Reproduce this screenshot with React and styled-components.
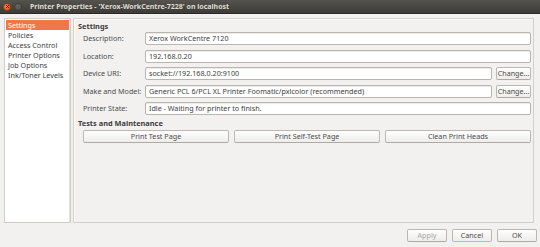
import React from 'react';
import styled, { createGlobalStyle } from 'styled-components';

const GlobalStyle = createGlobalStyle`
  html, body {
    margin: 0;
    padding: 0;
    background: #f2f1f0;
  }
  body {
    font-family: "Noto Sans", "DejaVu Sans", sans-serif;
    color: #3c3c3c;
  }
`;

const Window = styled.div`
  width: 540px;
  height: 247px;
  display: flex;
  flex-direction: column;
  background: #f2f1f0;
  overflow: hidden;
`;

const TitleBar = styled.div`
  height: 13px;
  display: flex;
  align-items: center;
  padding-left: 3px;
  background: linear-gradient(#55534d, #3c3b37);
  border-bottom: 1px solid #2b2a27;
`;

const WinButton = styled.span`
  width: 8px;
  height: 8px;
  border-radius: 50%;
  margin-right: 3px;
  display: flex;
  align-items: center;
  justify-content: center;
  background: ${p => (p.$close ? 'radial-gradient(circle at 40% 35%, #f58a5c, #df4a16)' : 'linear-gradient(#6a6862, #55534e)')};
  border: 0.5px solid ${p => (p.$close ? '#a83a10' : '#3a3935')};
  box-sizing: border-box;
`;

const Title = styled.span`
  margin-left: 5px;
  font-size: 7px;
  font-weight: 700;
  color: #dfdbd2;
  white-space: nowrap;
`;

const Body = styled.div`
  display: flex;
  gap: 2px;
  padding: 4px 6px 0 4px;
  height: 205px;
`;

const Sidebar = styled.ul`
  width: 65px;
  margin: 0;
  padding: 1px 0 0;
  list-style: none;
  background: #fff;
  border: 1px solid #cfccc7;
  box-shadow: inset -1px 0 0 #e6e4e0;
`;

const SideItem = styled.li`
  height: 10px;
  line-height: 10px;
  padding-left: 2px;
  margin: 0 1px;
  font-size: 7.2px;
  white-space: nowrap;
  background: ${p => (p.$active ? '#f07746' : 'transparent')};
  color: ${p => (p.$active ? '#fff' : '#3c3c3c')};
`;

const Panel = styled.section`
  flex: 1;
  border: 1px solid #d3d0cb;
  box-shadow: inset 1px 1px 0 #fbfbfa;
  padding: 2px 2px 0 4px;
`;

const Heading = styled.div`
  font-size: 7.4px;
  font-weight: 700;
  line-height: 11px;
  height: 11px;
`;

const Form = styled.div`
  display: grid;
  grid-template-columns: 62px 1fr;
  row-gap: 4.5px;
  padding-left: 5px;
  margin-bottom: 3px;
`;

const Label = styled.div`
  font-size: 7.2px;
  line-height: 13px;
  color: #4c4c4c;
  white-space: nowrap;
`;

const FieldRow = styled.div`
  display: flex;
  gap: 4px;
`;

const Entry = styled.div`
  flex: 1;
  height: 13px;
  box-sizing: border-box;
  background: #fff;
  border: 1px solid #b8b5af;
  border-radius: 2px;
  box-shadow: inset 0 1px 1px #eceae7;
  font-size: 7.2px;
  line-height: 11px;
  padding-left: 3px;
  white-space: nowrap;
  overflow: hidden;
`;

const Button = styled.button`
  height: 13px;
  box-sizing: border-box;
  padding: 0;
  border: 1px solid #bcb8b1;
  border-bottom-color: ${p => (p.$focus ? '#e9a89a' : '#aeaaa3')};
  border-radius: 2px;
  background: linear-gradient(#fdfdfc, #eeedeb);
  font-family: inherit;
  font-size: 7.2px;
  line-height: 11px;
  color: ${p => (p.$disabled ? '#aaa7a2' : '#4c4c4c')};
  white-space: nowrap;
`;

const ChangeButton = styled(Button)`
  width: 35px;
`;

const ActionRow = styled.div`
  display: grid;
  grid-template-columns: repeat(3, 1fr);
  gap: 5px;
  padding-left: 5px;
  margin-top: 1px;
`;

const Footer = styled.div`
  display: flex;
  justify-content: flex-end;
  gap: 5px;
  padding: 6px 3px 0 0;
`;

const DialogButton = styled(Button)`
  width: 40px;
`;

const rows = [
  { label: 'Description:', value: 'Xerox WorkCentre 7120' },
  { label: 'Location:', value: '192.168.0.20' },
  { label: 'Device URI:', value: 'socket://192.168.0.20:9100', change: true },
  { label: 'Make and Model:', value: 'Generic PCL 6/PCL XL Printer Foomatic/pxlcolor (recommended)', change: true },
  { label: 'Printer State:', value: 'Idle - Waiting for printer to finish.' },
];

const sections = ['Settings', 'Policies', 'Access Control', 'Printer Options', 'Job Options', 'Ink/Toner Levels'];

export default function App() {
  return (
    <>
      <GlobalStyle />
      <Window>
        <TitleBar>
          <WinButton $close>
            <svg width="5" height="5" viewBox="0 0 5 5">
              <path d="M1 1 L4 4 M4 1 L1 4" stroke="#4a1e0c" strokeWidth="0.9" />
            </svg>
          </WinButton>
          <WinButton />
          <Title>Printer Properties - 'Xerox-WorkCentre-7228' on localhost</Title>
        </TitleBar>
        <Body>
          <Sidebar>
            {sections.map((s, i) => (
              <SideItem key={s} $active={i === 0}>{s}</SideItem>
            ))}
          </Sidebar>
          <Panel>
            <Heading>Settings</Heading>
            <Form>
              {rows.map(r => (
                <React.Fragment key={r.label}>
                  <Label>{r.label}</Label>
                  <FieldRow>
                    <Entry>{r.value}</Entry>
                    {r.change && <ChangeButton>Change...</ChangeButton>}
                  </FieldRow>
                </React.Fragment>
              ))}
            </Form>
            <Heading>Tests and Maintenance</Heading>
            <ActionRow>
              <Button>Print Test Page</Button>
              <Button>Print Self-Test Page</Button>
              <Button>Clean Print Heads</Button>
            </ActionRow>
          </Panel>
        </Body>
        <Footer>
          <DialogButton $disabled>Apply</DialogButton>
          <DialogButton $focus>Cancel</DialogButton>
          <DialogButton>OK</DialogButton>
        </Footer>
      </Window>
    </>
  );
}
